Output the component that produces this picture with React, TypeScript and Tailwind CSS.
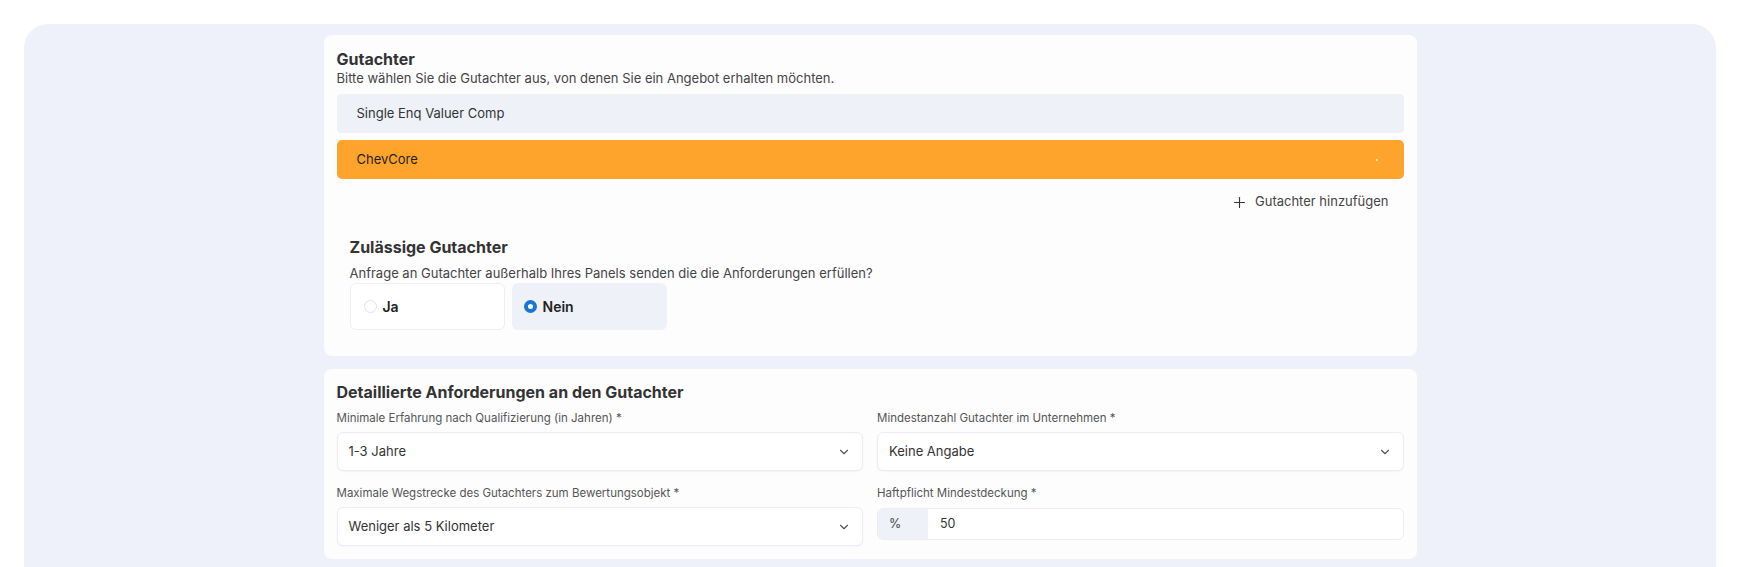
import { ChevronDown, Plus } from "lucide-react";

function SelectField({ label, value }: { label: string; value: string }) {
  return (
    <div className="flex flex-col">
      <label className="text-[11.5px] leading-4 text-[#555]">{label}</label>
      <div className="mt-[6px] flex h-[39px] items-center justify-between rounded-md border border-[#eaedf3] bg-white pl-[11px] pr-[11px] shadow-[0_1px_2px_rgba(20,30,60,0.04)]">
        <span className="text-[13px] text-[#333]">{value}</span>
        <ChevronDown size={14} strokeWidth={2} className="text-[#555]" />
      </div>
    </div>
  );
}

export default function App() {
  return (
    <div className="h-[567px] overflow-hidden bg-white px-[24px] pt-[24px] font-['Inter',sans-serif] text-[#333]">
      <div className="h-[600px] rounded-t-[24px] bg-[#eef1f9] pt-[11px]">
        <div className="mx-auto flex w-[1093px] flex-col gap-[13px]">
          {/* Gutachter */}
          <div className="rounded-lg bg-[#fdfdfe] px-[13px] pb-[13px] pt-[14px]">
            <h2 className="text-base font-bold leading-5 text-[#333]">Gutachter</h2>
            <p className="text-[13px] leading-[18px] text-[#444]">
              Bitte wählen Sie die Gutachter aus, von denen Sie ein Angebot erhalten möchten.
            </p>
            <div className="mt-[7px] flex flex-col gap-[7px]">
              <div className="flex h-[39px] items-center rounded-[4px] bg-[#eef1f8] pl-[20px] text-[13px] text-[#333]">
                Single Enq Valuer Comp
              </div>
              <div className="flex h-[39px] items-center justify-between rounded-[5px] bg-[#fea42c] pl-[20px] pr-[26px] text-[13px] text-[#1f1f1f]">
                <span>ChevCore</span>
                <span className="h-[2px] w-[2px] rounded-full bg-white" />
              </div>
            </div>
            <div className="mt-[5px] flex justify-end">
              <button className="flex h-9 items-center gap-[7px] pr-[15px] text-[13px] text-[#444]">
                <Plus size={17} strokeWidth={1.6} className="text-[#333]" />
                Gutachter hinzufügen
              </button>
            </div>
            <div className="px-[13px] pb-[13px] pt-[17px]">
              <h3 className="text-base font-bold leading-5 text-[#333]">Zulässige Gutachter</h3>
              <p className="mt-[6px] text-[13px] leading-5 text-[#444]">
                Anfrage an Gutachter außerhalb Ihres Panels senden die die Anforderungen erfüllen?
              </p>
              <div className="flex gap-[7px]">
                <div className="flex h-[47px] w-[155px] items-center gap-[6px] rounded-md border border-[#eceef3] bg-white pl-[13px]">
                  <span className="h-[13px] w-[13px] rounded-full border border-[#dfe2e9] bg-white" />
                  <span className="text-sm font-semibold text-[#222]">Ja</span>
                </div>
                <div className="flex h-[47px] w-[155px] items-center gap-[6px] rounded-md bg-[#eef1f8] pl-[12px]">
                  <span className="h-[13px] w-[13px] rounded-full border-[4px] border-[#1976d2] bg-white" />
                  <span className="text-sm font-semibold text-[#222]">Nein</span>
                </div>
              </div>
            </div>
          </div>

          {/* Detaillierte Anforderungen */}
          <div className="rounded-lg bg-[#fdfdfe] px-[13px] pb-[13px] pt-[13px]">
            <h2 className="text-base font-bold leading-5 text-[#333]">
              Detaillierte Anforderungen an den Gutachter
            </h2>
            <div className="mt-[8px] grid grid-cols-2 gap-x-[14px] gap-y-[14px]">
              <SelectField label="Minimale Erfahrung nach Qualifizierung (in Jahren) *" value="1-3 Jahre" />
              <SelectField label="Mindestanzahl Gutachter im Unternehmen *" value="Keine Angabe" />
              <SelectField
                label="Maximale Wegstrecke des Gutachters zum Bewertungsobjekt *"
                value="Weniger als 5 Kilometer"
              />
              <div className="flex flex-col">
                <label className="text-[11.5px] leading-4 text-[#555]">Haftpflicht Mindestdeckung *</label>
                <div className="mt-[7px] flex h-[32px] overflow-hidden rounded-md border border-[#eaedf3] bg-white">
                  <div className="flex w-[50px] items-center bg-[#eef1f8] pl-[11px] text-[12.5px] text-[#444]">%</div>
                  <div className="flex items-center pl-[12px] text-[12.5px] text-[#333]">50</div>
                </div>
              </div>
            </div>
          </div>
        </div>
      </div>
    </div>
  );
}
